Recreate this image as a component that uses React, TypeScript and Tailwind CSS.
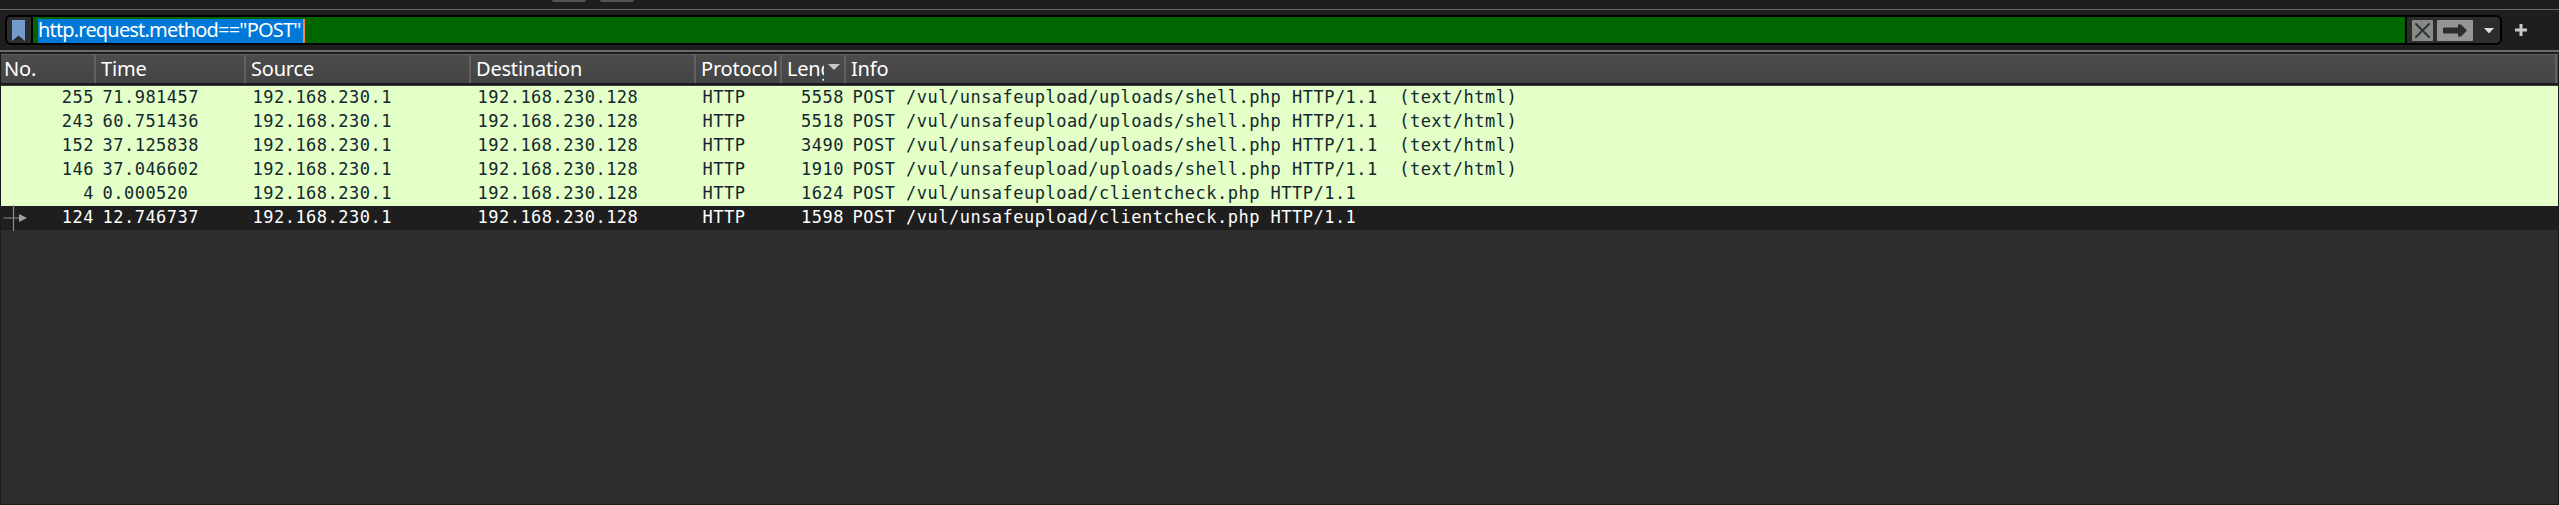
import React from "react";

type Packet = { no: string; time: string; len: string; info: string; selected?: boolean };

const shell = "POST /vul/unsafeupload/uploads/shell.php HTTP/1.1  (text/html)";
const check = "POST /vul/unsafeupload/clientcheck.php HTTP/1.1";

const packets: Packet[] = [
  { no: "255", time: "71.981457", len: "5558", info: shell },
  { no: "243", time: "60.751436", len: "5518", info: shell },
  { no: "152", time: "37.125838", len: "3490", info: shell },
  { no: "146", time: "37.046602", len: "1910", info: shell },
  { no: "4", time: "0.000520", len: "1624", info: check },
  { no: "124", time: "12.746737", len: "1598", info: check, selected: true },
];

const columns = "grid grid-cols-[95px_150px_225px_225px_86px_64px_1fr]";

function HeaderCell({ children, className = "" }: { children?: React.ReactNode; className?: string }) {
  return (
    <div className={`flex h-full items-center overflow-hidden border-r-2 border-[#606060] whitespace-nowrap ${className}`}>
      {children}
    </div>
  );
}

function FilterBar() {
  return (
    <div className="flex h-[40px] items-center pl-[5px]">
      <div className="flex h-[30px] w-[2497px] overflow-hidden rounded-[6px] border-2 border-black bg-[#2d2d2d]">
        <div className="flex w-[24px] shrink-0 items-start pt-[3px] pl-[5px]">
          <svg width="13" height="22" viewBox="0 0 13 22">
            <path d="M0 0H13V21L6.5 15.500L0 21Z" fill="#739bcd" />
          </svg>
        </div>
        <div className="flex grow items-end border-l-2 border-black bg-[#006600] pl-[5px]">
          <div className="h-[24px] w-[265px] bg-[#0078d7] text-[20px] leading-[22px] tracking-[-0.820px] whitespace-nowrap text-white">
            http.request.method==&quot;POST&quot;
          </div>
          <div className="h-[24px] w-[2px] bg-[#ff8728]" />
        </div>
        <div className="flex w-[95px] shrink-0 items-start border-l-2 border-black pt-[3px] pl-[5px]">
          <svg width="88" height="21" viewBox="0 0 88 21">
            <rect width="21" height="21" rx="1" fill="#888a85" />
            <path d="M4 4L17 17M17 4L4 17" stroke="#2e3436" strokeWidth="2" strokeLinecap="round" />
            <rect x="25" width="36" height="21" rx="1" fill="#959595" />
            <path d="M32 7.500H46V4.500H49L55 10.500L49 16.500H46V13.500H32Q31 13.500 31 12.500V8.500Q31 7.500 32 7.500Z" fill="#2d2d2d" />
            <path d="M72 8H82L77 13.500Z" fill="#dcdcdc" />
          </svg>
        </div>
      </div>
      <svg className="ml-[13px]" width="12" height="12" viewBox="0 0 12 12">
        <path d="M6 0V12M0 6H12" stroke="#c8c8c8" strokeWidth="3" />
      </svg>
    </div>
  );
}

export default function App() {
  return (
    <div className="flex h-[505px] w-[2559px] flex-col overflow-hidden bg-[#1e1e1e] font-['Noto_Sans',sans-serif]">
      <div className="flex h-[9px] shrink-0 items-start gap-[14px] pl-[552px]">
        <div className="h-[2px] w-[34px] rounded-b-[2px] bg-[#555555]" />
        <div className="h-[2px] w-[34px] rounded-b-[2px] bg-[#555555]" />
      </div>
      <div className="h-px shrink-0 bg-[#6a6a6a]" />
      <FilterBar />
      <div className="h-[2px] shrink-0 bg-[#6a6a6a]" />
      <div className="mt-[2px] flex grow flex-col border-r border-b border-l border-[#1a1a1a] bg-[#2d2d2d]">
        <div className={`h-[29px] border-t border-[#606060] bg-linear-to-b from-[#4c4c4c] to-[#444444] pr-px text-[20px] tracking-[-0.200px] text-white ${columns}`}>
          <HeaderCell className="pl-[3px]">No.</HeaderCell>
          <HeaderCell className="pl-[5px]">Time</HeaderCell>
          <HeaderCell className="pl-[5px]">Source</HeaderCell>
          <HeaderCell className="pl-[5px]">Destination</HeaderCell>
          <HeaderCell className="pl-[5px]">Protocol</HeaderCell>
          <HeaderCell className="pl-[5px]">
            <span className="w-[37px] shrink-0 overflow-hidden">Length</span>
            <svg className="-mt-[5px] ml-[4px] shrink-0" width="12" height="6" viewBox="0 0 12 6">
              <path d="M0 0H12L6 6Z" fill="#c8c8c8" />
            </svg>
          </HeaderCell>
          <HeaderCell className="pl-[5px]">Info</HeaderCell>
        </div>
        <div className="h-[3px] border-b border-[#3c3c3c] bg-[#1a1a1a]" />
        {packets.map((p) => (
          <div
            key={p.no}
            className={`h-[24px] font-['DejaVu_Sans_Mono',monospace] text-[17px] leading-[22px] tracking-[0.485px] whitespace-pre ${columns} ${
              p.selected ? "bg-[#1e1e1e] text-white" : "bg-[#e4ffc7] text-[#12272e]"
            }`}
          >
            <div className="flex h-[24px] justify-between pr-[2px] pl-[2px]">
              <span>
                {p.selected && (
                  <svg width="24" height="26" viewBox="0 0 24 26" className="-mt-px">
                    <path d="M0.500 13H16M10.500 0V26" stroke="#8c8c8c" strokeWidth="1.200" />
                    <path d="M16 9L24 13L16 17Z" fill="#a0a0a0" />
                  </svg>
                )}
              </span>
              <span>{p.no}</span>
            </div>
            <div className="pl-[6.500px]">{p.time}</div>
            <div className="pl-[6.500px]">192.168.230.1</div>
            <div className="pl-[6.500px]">192.168.230.128</div>
            <div className="pl-[6.500px]">HTTP</div>
            <div className="pr-[2px] text-right">{p.len}</div>
            <div className="pl-[6.500px]">{p.info}</div>
          </div>
        ))}
      </div>
    </div>
  );
}
